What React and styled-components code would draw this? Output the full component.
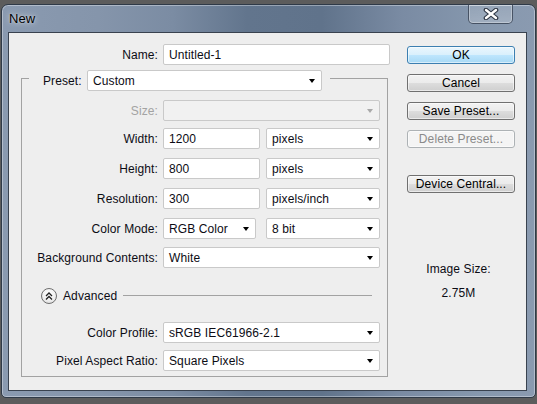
import React from "react";
import styled, { createGlobalStyle } from "styled-components";

const GlobalStyle = createGlobalStyle`
  html, body {
    margin: 0;
    padding: 0;
    background: #5c5c5c;
  }
  body {
    font-family: "Liberation Sans", Arial, sans-serif;
    font-size: 12px;
    letter-spacing: 0.1px;
    color: #0c0c14;
  }
`;

const Desktop = styled.div`
  width: 537px;
  height: 404px;
  box-sizing: border-box;
  padding: 4px 1px 0 1px;
  background: #5c5c5c;
  overflow: hidden;
`;

const Window = styled.div`
  width: 535px;
  height: 394px;
  box-sizing: border-box;
  border: 1px solid #2f3a48;
  border-radius: 7px 7px 5px 5px;
  background: linear-gradient(
    90deg,
    #8a9ab0 0%,
    #8595ab 18%,
    #7b8ca3 32%,
    #62758d 46%,
    #60738b 60%,
    #7a8ba3 75%,
    #8698ae 90%,
    #8a9ab0 100%
  );
  box-shadow: inset 0 0 0 1px rgba(255, 255, 255, 0.35);
  padding: 0 8px 6px 6px;
  display: flex;
  flex-direction: column;
`;

const TitleBar = styled.div`
  height: 27px;
  display: flex;
  align-items: flex-start;
  flex-shrink: 0;
`;

const Title = styled.div`
  padding-left: 1px;
  line-height: 27px;
  font-size: 13px;
  color: #000;
  text-shadow: 0 0 6px rgba(255, 255, 255, 0.7), 0 0 2px rgba(255, 255, 255, 0.5);
`;

const CloseButton = styled.div`
  margin-left: auto;
  margin-right: 14px;
  width: 45px;
  height: 19px;
  box-sizing: border-box;
  border: 1px solid rgba(45, 55, 72, 0.75);
  border-top: none;
  border-radius: 0 0 5px 5px;
  background: linear-gradient(rgba(255, 255, 255, 0.12), rgba(255, 255, 255, 0.22));
  box-shadow: inset 0 0 0 1px rgba(255, 255, 255, 0.3);
  display: flex;
  align-items: center;
  justify-content: center;
`;

const Client = styled.div`
  flex: 1;
  display: flex;
  background: #eeeeee;
  border: 1px solid #39424f;
`;

const LeftPane = styled.div`
  display: flex;
  flex-direction: column;
  padding-left: 12px;
  width: 367px;
`;

const FieldRow = styled.div`
  display: grid;
  grid-template-columns: ${(p) => p.$label}px ${(p) => p.$control}px;
  column-gap: 5px;
  align-items: center;
  margin-top: ${(p) => p.$top || 0}px;
`;

const Label = styled.div`
  text-align: right;
  white-space: nowrap;
  color: ${(p) => (p.$disabled ? "#a3a3a3" : "inherit")};
`;

const TextBox = styled.div`
  height: 21px;
  box-sizing: border-box;
  border: 1px solid #c9c9c9;
  border-radius: 2px;
  background: #fff;
  padding-left: 5px;
  display: flex;
  align-items: center;
  width: ${(p) => (p.$width ? `${p.$width}px` : "auto")};
`;

const Combo = styled.div`
  height: 21px;
  box-sizing: border-box;
  border: 1px solid #c9c9c9;
  border-radius: 2px;
  background: ${(p) => (p.$disabled ? "#f1f1f1" : "#fff")};
  padding-left: 5px;
  display: flex;
  align-items: center;
  width: ${(p) => (p.$width ? `${p.$width}px` : "auto")};
  flex-shrink: 0;
`;

const ComboText = styled.span`
  flex: 1;
  white-space: nowrap;
`;

const Arrow = styled.span`
  width: 0;
  height: 0;
  margin-right: 6px;
  border-left: 3.5px solid transparent;
  border-right: 3.5px solid transparent;
  border-top: 4px solid ${(p) => (p.$disabled ? "#a9a9a9" : "#000")};
`;

const Pair = styled.div`
  display: flex;
  gap: ${(p) => p.$gap}px;
`;

const Group = styled.fieldset`
  margin: 0;
  padding: 0 6px 5px 0;
  border: 1px solid #a2a2a2;
  min-width: 0;
`;

const Legend = styled.legend`
  margin-left: 7px;
  padding: 5px 8px 0 14px;
`;

const LegendInner = styled.div`
  display: flex;
  align-items: center;
`;

const PresetLabel = styled.div`
  width: 44px;
`;

const AdvancedRow = styled.div`
  display: flex;
  align-items: center;
  margin-top: 20px;
  padding-left: 19px;
  padding-right: 9px;
  height: 16px;
`;

const RoundToggle = styled.div`
  width: 16px;
  height: 16px;
  box-sizing: border-box;
  border-radius: 50%;
  border: 1px solid #6f6f6f;
  background: radial-gradient(circle at 50% 35%, #ffffff 0%, #f1f1f1 55%, #d2d2d2 100%);
  display: flex;
  align-items: center;
  justify-content: center;
  flex-shrink: 0;
`;

const AdvancedText = styled.span`
  margin-left: 6px;
`;

const Rule = styled.div`
  flex: 1;
  height: 1px;
  margin-left: 6px;
  margin-top: -2px;
  background: #a2a2a2;
`;

const RightPane = styled.div`
  margin-left: auto;
  margin-right: 11px;
  width: 108px;
  padding-top: 13px;
  display: flex;
  flex-direction: column;
`;

const Button = styled.div`
  height: 18px;
  box-sizing: border-box;
  margin-top: ${(p) => p.$top || 0}px;
  border: 1px solid ${(p) => (p.$primary ? "#3c7fb1" : p.$disabled ? "#adb2b5" : "#707070")};
  border-radius: 3px;
  background: ${(p) =>
    p.$primary
      ? "linear-gradient(#eaf6fd 0%, #d9f0fc 50%, #bee6fd 51%, #a7d9f5 100%)"
      : p.$disabled
      ? "#f4f4f4"
      : "linear-gradient(#f2f2f2 0%, #ebebeb 50%, #dddddd 51%, #cfcfcf 100%)"};
  box-shadow: inset 0 0 0 1px rgba(255, 255, 255, 0.55);
  color: ${(p) => (p.$disabled ? "#8a8a8a" : "#000")};
  display: flex;
  align-items: center;
  justify-content: center;
  white-space: nowrap;
`;

const SizeInfo = styled.div`
  margin-top: 69px;
  display: flex;
  flex-direction: column;
  align-items: center;
  gap: 10px;
  padding-right: 5px;
`;

const Select = ({ value, width, disabled }) => (
  <Combo $width={width} $disabled={disabled}>
    <ComboText>{value}</ComboText>
    <Arrow $disabled={disabled} />
  </Combo>
);

const CloseGlyph = () => (
  <svg width="16" height="12" viewBox="0 0 16 12">
    <path d="M3 2 L13 10 M13 2 L3 10" stroke="#2c3442" strokeWidth="4.6" strokeLinecap="round" />
    <path d="M3 2 L13 10 M13 2 L3 10" stroke="#ffffff" strokeWidth="2.4" strokeLinecap="round" />
  </svg>
);

const CollapseGlyph = () => (
  <svg width="8" height="8" viewBox="0 0 8 8">
    <path d="M1 4 L4 1 L7 4 M1 7.5 L4 4.5 L7 7.5" stroke="#222" strokeWidth="1.3" fill="none" />
  </svg>
);

export default function App() {
  return (
    <>
      <GlobalStyle />
      <Desktop>
        <Window>
          <TitleBar>
            <Title>New</Title>
            <CloseButton>
              <CloseGlyph />
            </CloseButton>
          </TitleBar>
          <Client>
            <LeftPane>
              <FieldRow $label={137} $control={227} $top={11}>
                <Label>Name:</Label>
                <TextBox>Untitled-1</TextBox>
              </FieldRow>
              <Group>
                <Legend>
                  <LegendInner>
                    <PresetLabel>Preset:</PresetLabel>
                    <Select value="Custom" width={235} />
                  </LegendInner>
                </Legend>
                <FieldRow $label={136} $control={217} $top={9}>
                  <Label $disabled>Size:</Label>
                  <Select value="" disabled />
                </FieldRow>
                <FieldRow $label={136} $control={217} $top={7}>
                  <Label>Width:</Label>
                  <Pair $gap={6}>
                    <TextBox $width={97}>1200</TextBox>
                    <Select value="pixels" width={114} />
                  </Pair>
                </FieldRow>
                <FieldRow $label={136} $control={217} $top={9}>
                  <Label>Height:</Label>
                  <Pair $gap={6}>
                    <TextBox $width={97}>800</TextBox>
                    <Select value="pixels" width={114} />
                  </Pair>
                </FieldRow>
                <FieldRow $label={136} $control={217} $top={9}>
                  <Label>Resolution:</Label>
                  <Pair $gap={6}>
                    <TextBox $width={97}>300</TextBox>
                    <Select value="pixels/inch" width={114} />
                  </Pair>
                </FieldRow>
                <FieldRow $label={136} $control={217} $top={9}>
                  <Label>Color Mode:</Label>
                  <Pair $gap={10}>
                    <Select value="RGB Color" width={93} />
                    <Select value="8 bit" width={114} />
                  </Pair>
                </FieldRow>
                <FieldRow $label={136} $control={217} $top={8}>
                  <Label>Background Contents:</Label>
                  <Select value="White" />
                </FieldRow>
                <AdvancedRow>
                  <RoundToggle>
                    <CollapseGlyph />
                  </RoundToggle>
                  <AdvancedText>Advanced</AdvancedText>
                  <Rule />
                </AdvancedRow>
                <FieldRow $label={136} $control={217} $top={18}>
                  <Label>Color Profile:</Label>
                  <Select value="sRGB IEC61966-2.1" />
                </FieldRow>
                <FieldRow $label={136} $control={217} $top={7}>
                  <Label>Pixel Aspect Ratio:</Label>
                  <Select value="Square Pixels" />
                </FieldRow>
              </Group>
            </LeftPane>
            <RightPane>
              <Button $primary>OK</Button>
              <Button $top={10}>Cancel</Button>
              <Button $top={10}>Save Preset...</Button>
              <Button $top={10} $disabled>
                Delete Preset...
              </Button>
              <Button $top={27}>Device Central...</Button>
              <SizeInfo>
                <span>Image Size:</span>
                <span>2.75M</span>
              </SizeInfo>
            </RightPane>
          </Client>
        </Window>
      </Desktop>
    </>
  );
}
